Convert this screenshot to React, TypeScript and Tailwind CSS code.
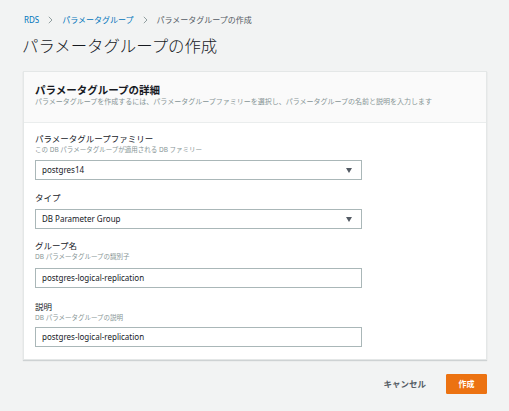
import React from "react";

const font = { fontFamily: "'Noto Sans', 'Noto Sans CJK JP', sans-serif" };

function Chevron() {
  return (
    <svg width="5" height="8" viewBox="0 0 5 8" className="mx-[9px]">
      <path d="M0.8 0.8 L4 4 L0.8 7.2" fill="none" stroke="#879596" strokeWidth="0.9" />
    </svg>
  );
}

function Caret() {
  return (
    <svg width="6" height="5" viewBox="0 0 6 5">
      <path d="M0 0 L6 0 L3 5 Z" fill="#545b64" />
    </svg>
  );
}

function Field({
  label,
  sub,
  value,
  select,
  gap,
}: {
  label: string;
  sub?: string;
  value: string;
  select?: boolean;
  gap: string;
}) {
  return (
    <div className="flex flex-col">
      <div className="text-[8.5px] leading-[12px] text-[#16191f]">{label}</div>
      {sub && <div className="text-[6.5px] leading-[9px] text-[#879596]">{sub}</div>}
      <div
        className={`${gap} flex h-[20px] w-[327px] items-center justify-between border border-[#aab7b8] bg-white pl-[6px] pr-[9px] text-[8px] text-[#16191f]`}
      >
        <span>{value}</span>
        {select && <Caret />}
      </div>
    </div>
  );
}

export default function App() {
  return (
    <div style={font} className="flex h-[411px] w-full flex-col bg-[#f2f3f3] pl-[22px] pr-[22px]">
      <div className="mt-[14px] flex h-[12px] items-center pl-[2px] text-[8px] leading-[12px]">
        <span className="text-[#0073bb]">RDS</span>
        <Chevron />
        <span className="text-[#0073bb]">パラメータグループ</span>
        <Chevron />
        <span className="text-[#545b64]">パラメータグループの作成</span>
      </div>
      <div className="mt-[10px] h-[20px] text-[16.4px] leading-[20px] font-light text-[#16191f]">
        パラメータグループの作成
      </div>
      <div className="mt-[15px] ml-[1px] flex flex-col border border-[#e4e7e7] bg-white shadow-[0_1px_1px_rgba(0,28,36,0.15)]">
        <div className="h-[51px] border-b border-[#eaeded] bg-[#fafafa] px-[11px] pt-[12px]">
          <div className="text-[10.5px] leading-[12px] font-bold text-[#16191f]">
            パラメータグループの詳細
          </div>
          <div className="mt-[1px] text-[7px] leading-[10px] text-[#879596]">
            パラメータグループを作成するには、パラメータグループファミリーを選択し、パラメータグループの名前と説明を入力します
          </div>
        </div>
        <div className="flex flex-col px-[11px] pt-[10px] pb-[12px]">
          <Field
            label="パラメータグループファミリー"
            sub="この DB パラメータグループが適用される DB ファミリー"
            value="postgres14"
            select
            gap="mt-[6px]"
          />
          <div className="mt-[12px]">
            <Field label="タイプ" value="DB Parameter Group" select gap="mt-[5px]" />
          </div>
          <div className="mt-[11px]">
            <Field
              label="グループ名"
              sub="DB パラメータグループの識別子"
              value="postgres-logical-replication"
              gap="mt-[7px]"
            />
          </div>
          <div className="mt-[13px]">
            <Field
              label="説明"
              sub="DB パラメータグループの説明"
              value="postgres-logical-replication"
              gap="mt-[5px]"
            />
          </div>
        </div>
      </div>
      <div className="mt-[14px] flex items-center justify-end">
        <span className="text-[8.5px] font-bold text-[#545b64]">キャンセル</span>
        <div className="ml-[20px] flex h-[20px] w-[41px] items-center justify-center rounded-[1px] border border-[#ec7211] bg-[#ec7211] text-[8px] font-bold text-white">
          作成
        </div>
      </div>
    </div>
  );
}
